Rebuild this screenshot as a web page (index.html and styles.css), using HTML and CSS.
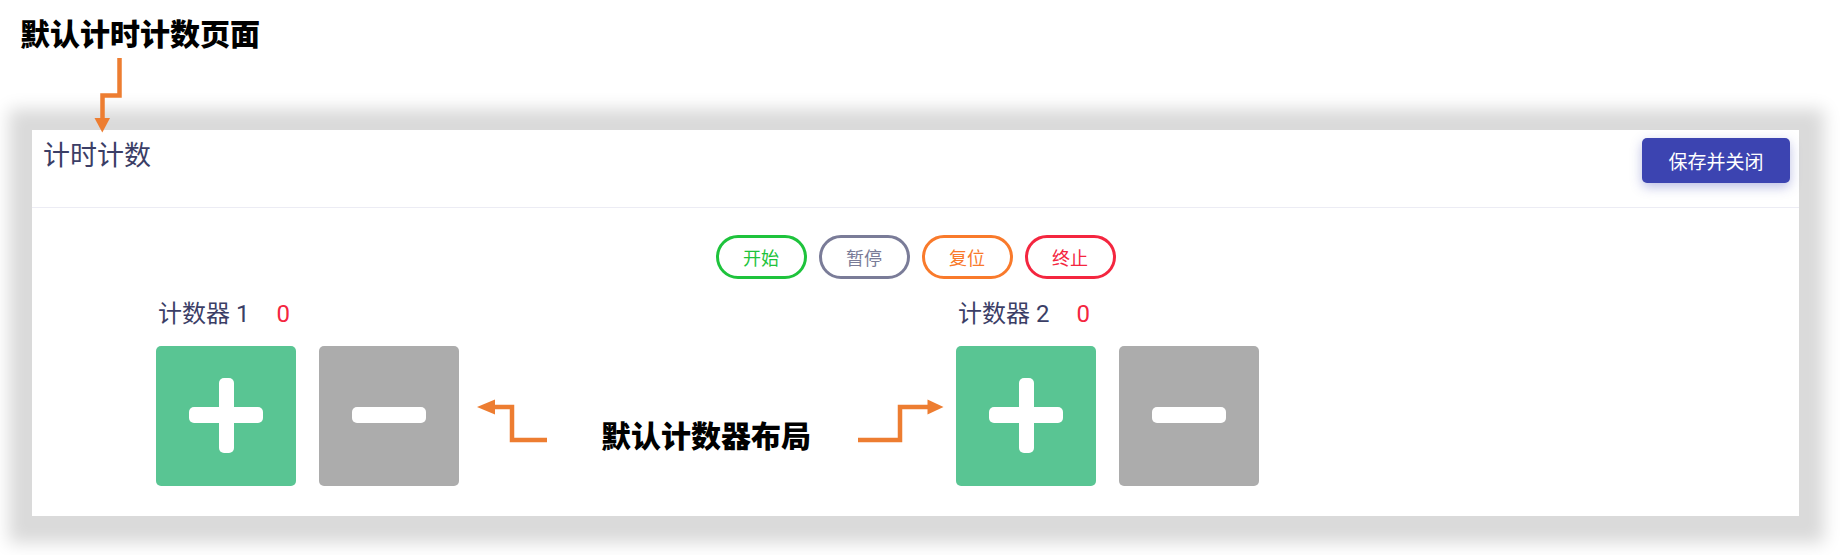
FILE: index.html
```html
<!DOCTYPE html>
<html lang="zh-CN">
<head>
<meta charset="utf-8">
<title>默认计时计数页面</title>
<link rel="stylesheet" href="styles.css">
</head>
<body>
<h1 class="doc-title">默认计时计数页面</h1>

<section class="panel">
  <header class="panel-header">
    <h2 class="panel-title">计时计数</h2>
    <button class="btn-save">保存并关闭</button>
  </header>

  <div class="controls">
    <button class="pill pill-start">开始</button>
    <button class="pill pill-pause">暂停</button>
    <button class="pill pill-reset">复位</button>
    <button class="pill pill-stop">终止</button>
  </div>

  <div class="counters">
    <div class="counter">
      <div class="counter-label">计数器 1<span class="counter-value">0</span></div>
      <div class="counter-keys">
        <div class="key key-plus">
          <svg width="140" height="140" viewBox="0 0 140 140"><rect x="33" y="61" width="74" height="16" rx="5" fill="#fff"/><rect x="63" y="32" width="15" height="75" rx="5" fill="#fff"/></svg>
        </div>
        <div class="key key-minus">
          <svg width="140" height="140" viewBox="0 0 140 140"><rect x="33" y="61" width="74" height="16" rx="5" fill="#fff"/></svg>
        </div>
      </div>
    </div>
    <div class="counter">
      <div class="counter-label">计数器 2<span class="counter-value">0</span></div>
      <div class="counter-keys">
        <div class="key key-plus">
          <svg width="140" height="140" viewBox="0 0 140 140"><rect x="33" y="61" width="74" height="16" rx="5" fill="#fff"/><rect x="63" y="32" width="15" height="75" rx="5" fill="#fff"/></svg>
        </div>
        <div class="key key-minus">
          <svg width="140" height="140" viewBox="0 0 140 140"><rect x="33" y="61" width="74" height="16" rx="5" fill="#fff"/></svg>
        </div>
      </div>
    </div>
  </div>
</section>

<div class="note-layout">默认计数器布局</div>

<svg class="arrows" width="1842" height="555" viewBox="0 0 1842 555">
  <g fill="none" stroke="#ed7d31" stroke-width="4.5">
    <polyline points="119.5,58 119.5,95.5 102.5,95.5 102.5,119"/>
    <polyline points="547,440 512,440 512,407 493,407"/>
    <polyline points="858,440 900,440 900,407 929,407"/>
  </g>
  <g fill="#ed7d31">
    <polygon points="94.5,118 110,118 102.3,132.5"/>
    <polygon points="495,399.5 495,414.5 477,407"/>
    <polygon points="927.5,399.5 927.5,414.5 943.5,407"/>
  </g>
</svg>
</body>
</html>
```

FILE: styles.css
```css
* { box-sizing: border-box; }

body {
  margin: 0;
  background: #ffffff;
  font-family: Roboto, "Noto Sans CJK SC", sans-serif;
  position: relative;
  width: 1842px;
  height: 555px;
  overflow: hidden;
}

.doc-title {
  margin: 0;
  padding: 17px 0 0 20px;
  font-family: "Noto Sans CJK SC", sans-serif;
  font-weight: 900;
  font-size: 30px;
  line-height: 30px;
  color: #000;
}

.panel {
  margin: 83px 0 0 32px;
  width: 1767px;
  background: #fff;
  box-shadow: 1px 3px 16px 24px #dadada;
  padding-bottom: 30px;
}

.panel-header {
  display: flex;
  justify-content: space-between;
  align-items: flex-start;
  height: 78px;
  padding: 8px 9px 0 11px;
  border-bottom: 1px solid #ececf4;
}

.panel-title {
  margin: 3px 0 0 0;
  font-weight: 400;
  font-size: 27px;
  line-height: 30px;
  color: #3b3e66;
}

.btn-save {
  width: 148px;
  height: 45px;
  border: none;
  border-radius: 5px;
  background: #3c44b1;
  color: #fff;
  font-family: Roboto, "Noto Sans CJK SC", sans-serif;
  font-size: 19px;
  box-shadow: 0 4px 12px rgba(60, 68, 177, 0.35);
  padding: 0;
}

.controls {
  display: flex;
  justify-content: center;
  gap: 12px;
  margin-top: 27px;
}

.pill {
  width: 91px;
  height: 44px;
  border-radius: 22px;
  background: #fff;
  border: 3px solid;
  font-family: Roboto, "Noto Sans CJK SC", sans-serif;
  font-size: 18px;
  padding: 0;
}
.pill-start { color: #1ec33c; border-color: #1ec33c; }
.pill-pause { color: #7a7c98; border-color: #7a7c98; }
.pill-reset { color: #f97a2b; border-color: #f97a2b; }
.pill-stop  { color: #f4263f; border-color: #f4263f; }

.counters {
  display: flex;
  padding-left: 124px;
  margin-top: 20px;
}

.counter { width: 800px; }

.counter-label {
  font-size: 24px;
  line-height: 30px;
  color: #3b3e66;
  padding-left: 2px;
}

.counter-value {
  color: #f4263f;
  margin-left: 27px;
}

.counter-keys {
  display: flex;
  gap: 23px;
  margin-top: 17px;
}

.key {
  width: 140px;
  height: 140px;
  border-radius: 5px;
}
.key svg { display: block; }
.key-plus { background: #59c593; }
.key-minus { background: #acacac; }

.note-layout {
  position: absolute;
  left: 601px;
  top: 419px;
  font-family: "Noto Sans CJK SC", sans-serif;
  font-weight: 900;
  font-size: 30px;
  line-height: 30px;
  color: #000;
}

.arrows {
  position: absolute;
  left: 0;
  top: 0;
  pointer-events: none;
}
```
